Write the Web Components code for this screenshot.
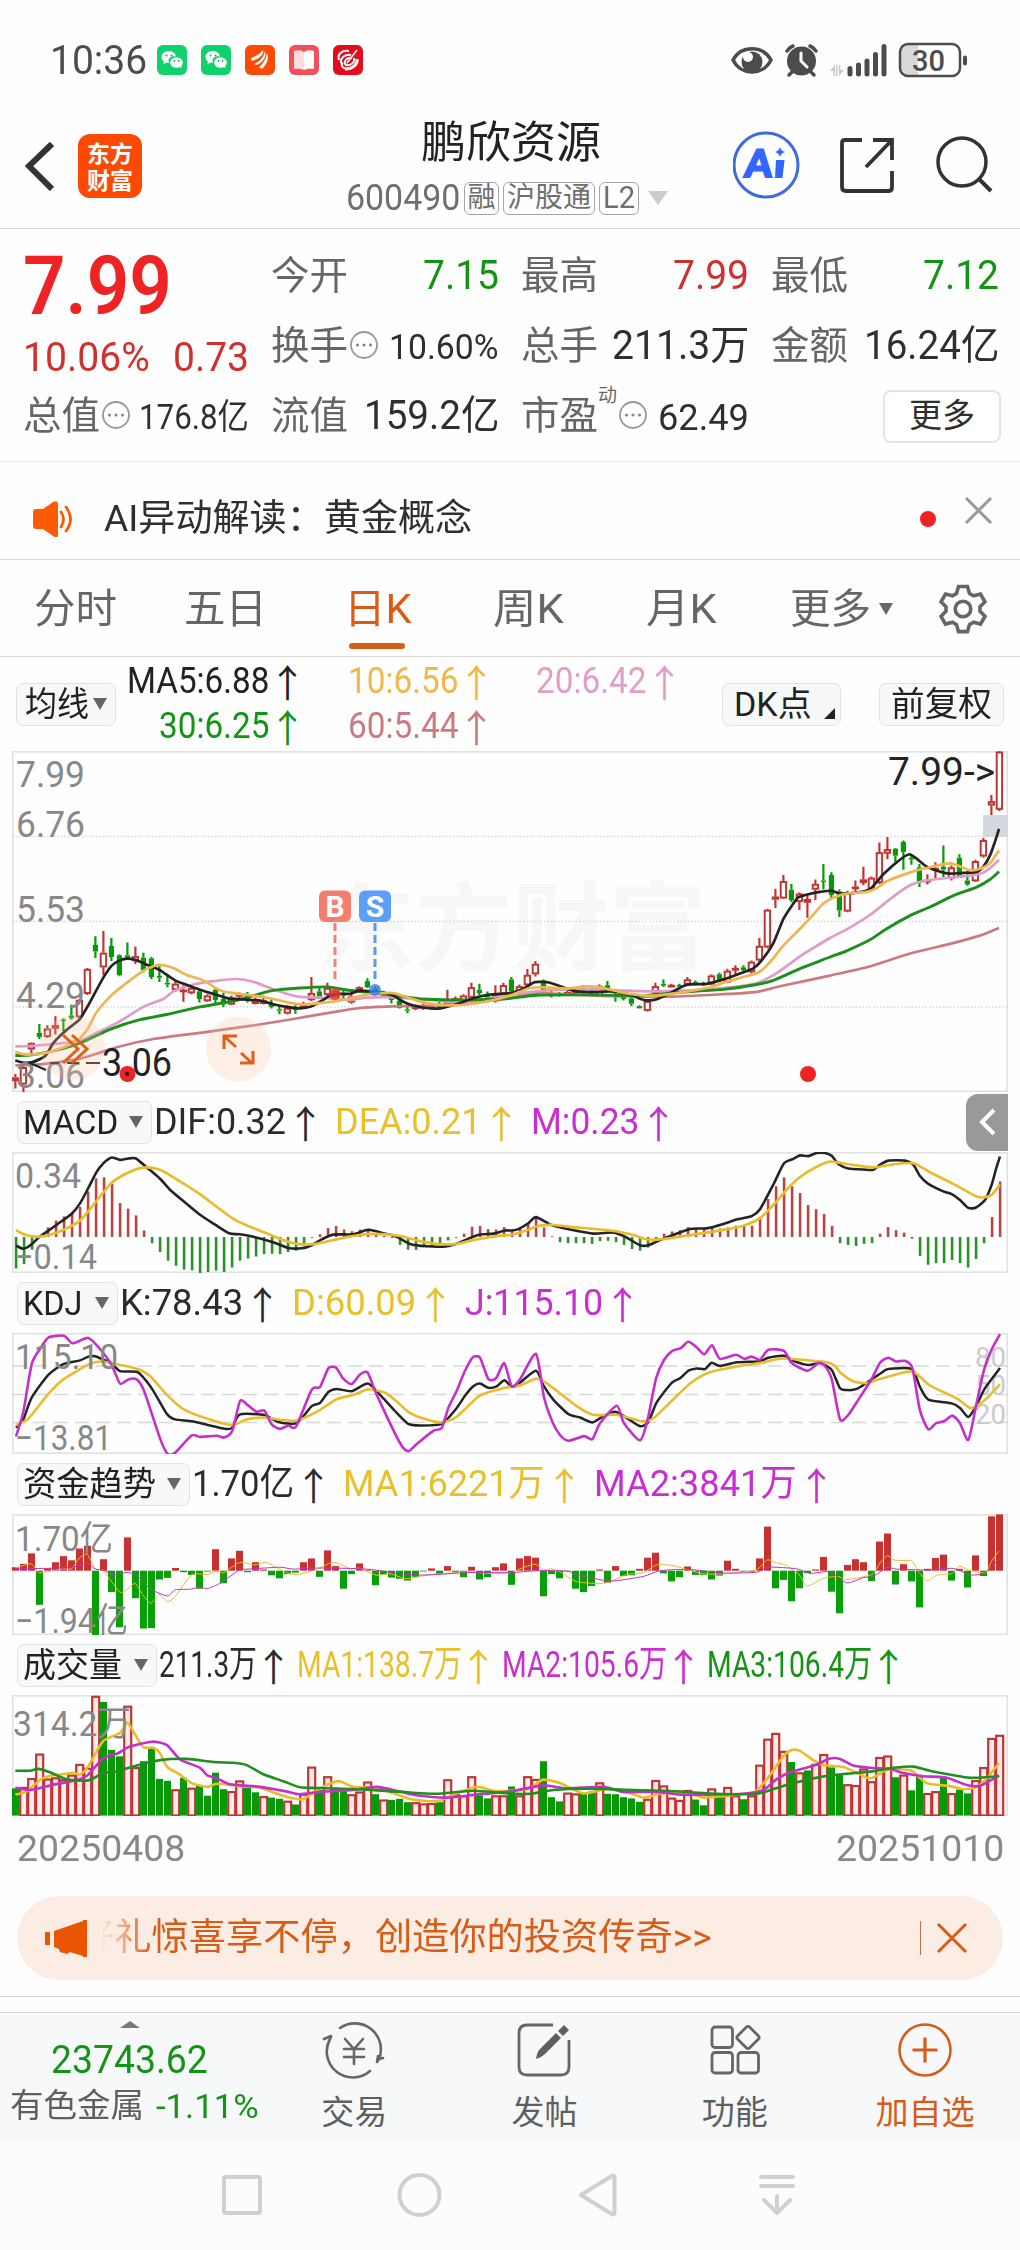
<!DOCTYPE html>
<html lang="zh-CN">
<head>
<meta charset="utf-8">
<title>鹏欣资源 600490</title>
<style>
    body {
        margin: 0;
        width: 1020px;
        height: 2250px;
        overflow: hidden;
        background: #fefefe;
        color: #2b2b2b;
        font-family: Roboto, "Noto Sans CJK SC", sans-serif;
        --up: #d0302e;
        --down: #149414;
        --accent: #d95c16;
        --muted: #666;
        --line: #d9d9d9;
    }
</style>
</head>
<body>
<status-bar></status-bar>
<stock-header></stock-header>
<quote-board></quote-board>
<notice-bar>AI异动解读：黄金概念</notice-bar>
<period-tabs></period-tabs>
<ma-legend></ma-legend>
<chart-panel kind="price"></chart-panel>

<indicator-legend>
    <chip-button w="135" tw="95" arrow>MACD</chip-button>
    <trend-value w="132">DIF:0.32</trend-value>
    <trend-value w="147" style="color:#e9c02c">DEA:0.21</trend-value>
    <trend-value w="108" style="color:#c92fd0">M:0.23</trend-value>
    <side-toggle slot="end"></side-toggle>
</indicator-legend>
<chart-panel kind="macd"></chart-panel>

<indicator-legend>
    <chip-button w="101" tw="59" arrow>KDJ</chip-button>
    <trend-value w="123">K:78.43</trend-value>
    <trend-value w="124" style="color:#e9c02c">D:60.09</trend-value>
    <trend-value w="138" style="color:#c92fd0">J:115.10</trend-value>
</indicator-legend>
<chart-panel kind="kdj"></chart-panel>

<indicator-legend>
    <chip-button w="173" tw="133" arrow>资金趋势</chip-button>
    <trend-value w="102">1.70亿</trend-value>
    <trend-value w="202" style="color:#e9c02c">MA1:6221万</trend-value>
    <trend-value w="203" style="color:#c92fd0">MA2:3841万</trend-value>
</indicator-legend>
<chart-panel kind="fund"></chart-panel>

<indicator-legend style="--item-gap:6px; --arrow-gap:-1px">
    <chip-button w="140" tw="99" arrow>成交量</chip-button>
    <trend-value w="98">211.3万</trend-value>
    <trend-value w="165" style="color:#e9c02c">MA1:138.7万</trend-value>
    <trend-value w="165" style="color:#c92fd0">MA2:105.6万</trend-value>
    <trend-value w="165" style="color:#149414">MA3:106.4万</trend-value>
</indicator-legend>
<chart-panel kind="volume"></chart-panel>

<date-range></date-range>
<promo-banner>好礼惊喜享不停，创造你的投资传奇&gt;&gt;</promo-banner>
<bottom-bar></bottom-bar>
<nav-bar></nav-bar>

<script>
function define(name, html, setup) {
    const template = document.createElement("template");
    template.innerHTML = html;
    customElements.define(name, class extends HTMLElement {
        connectedCallback() {
            if (this.shadowRoot) return;
            this.attachShadow({ mode: "open" }).append(template.content.cloneNode(true));
            if (setup) setup(this, this.shadowRoot);
        }
    });
}

// text squeezed or stretched to the width given by w
define("fit-text", `
    <style>
        :host { display: inline-block; white-space: nowrap; flex: none; }
        span { display: inline-block; transform-origin: 0 50%; }
    </style>
    <span><slot></slot></span>`, (host, root) => {
    const w = Number(host.getAttribute("w"));
    if (!w) return;
    const span = root.querySelector("span");
    const natural = span.offsetWidth;
    host.style.width = w + "px";
    span.style.transform = `scaleX(${w / natural})`;
});

define("chip-button", `
    <style>
        :host {
            display: flex;
            align-items: center;
            flex: none;
            box-sizing: border-box;
            height: 43px;
            padding: 0 0 0 5px;
            border: 1.5px solid #dfe2e6;
            border-radius: 7px;
            background: #f7f8fa;
            color: #222;
            font-size: 34px;
            line-height: 40px;
        }
        :host([center]) { justify-content: center; padding: 0; }
        i {
            display: none;
            margin-left: auto;
            margin-right: 8px;
            border: 7px solid transparent;
            border-top: 12px solid #666;
            border-bottom: 0;
        }
        :host([arrow]) i { display: block; }
    </style>
    <fit-text><slot></slot></fit-text><slot name="mark"></slot><i></i>`, (host, root) => {
    host.style.width = host.getAttribute("w") + "px";
    const text = root.querySelector("fit-text");
    const natural = text.offsetWidth;
    const tw = Number(host.getAttribute("tw"));
    text.style.width = tw + "px";
    text.shadowRoot.querySelector("span").style.transform = `scaleX(${tw / natural})`;
});

define("trend-value", `
    <style>
        :host { display: flex; align-items: center; flex: none; font-size: var(--value-size, 37px); line-height: 44px; }
        b { display: flex; justify-content: center; width: 35px; margin-left: var(--arrow-gap, 2px); font: 400 38px/44px "Noto Sans CJK SC", sans-serif; }
    </style>
    <fit-text><slot></slot></fit-text><b>↑</b>`, (host, root) => {
    const text = root.querySelector("fit-text");
    const w = Number(host.getAttribute("w"));
    const natural = text.offsetWidth;
    text.style.width = w + "px";
    text.shadowRoot.querySelector("span").style.transform = `scaleX(${w / natural})`;
});

define("status-bar", `
    <style>
        :host { display: flex; align-items: center; box-sizing: border-box; height: 120px; padding: 0 53px 0 50px; color: #4c4c4c; }
        .time { font-size: 41px; line-height: 46px; width: 107px; }
        .apps { display: flex; gap: 14px; flex: 1; }
        svg { display: block; flex: none; }
    </style>
    <div class="time"><fit-text w="97">10:36</fit-text></div>
    <div class="apps">
        <svg width="30" height="30" viewBox="0 0 30 30"><rect width="30" height="30" rx="6" fill="#0fd26c"/><path fill="#fff" d="M12 6c-4.500 0-7.500 2.800-7.500 6 0 1.900 1 3.500 2.500 4.500l-.7 2.800 2.900-1.700 2.800.4C10 13 14.500 10.500 18.900 11.500 18.500 8.300 15.500 6 12 6z"/><ellipse cx="19.500" cy="17.500" rx="6.300" ry="5.200" fill="#fff"/><path fill="#fff" d="M21 21l3.500 2.200-.5-3.500z"/><g fill="#0fb35c"><circle cx="9.500" cy="10.500" r="1"/><circle cx="14.500" cy="10.500" r="1"/><circle cx="17.500" cy="16" r=".9"/><circle cx="21.500" cy="16" r=".9"/></g></svg>
        <svg width="30" height="30" viewBox="0 0 30 30"><rect width="30" height="30" rx="6" fill="#0fd26c"/><path fill="#fff" d="M12 6c-4.500 0-7.500 2.800-7.500 6 0 1.900 1 3.500 2.500 4.500l-.7 2.800 2.900-1.700 2.800.4C10 13 14.500 10.500 18.900 11.500 18.500 8.300 15.500 6 12 6z"/><ellipse cx="19.500" cy="17.500" rx="6.300" ry="5.200" fill="#fff"/><path fill="#fff" d="M21 21l3.500 2.200-.5-3.500z"/><g fill="#0fb35c"><circle cx="9.500" cy="10.500" r="1"/><circle cx="14.500" cy="10.500" r="1"/><circle cx="17.500" cy="16" r=".9"/><circle cx="21.500" cy="16" r=".9"/></g></svg>
        <svg width="30" height="30" viewBox="0 0 30 30"><rect width="30" height="30" rx="6" fill="#fb4a04"/><g fill="#fff"><path d="M6 13C11 11 15 9 18 5c1.500 5-5 9-11 11z"/><path d="M9 19c5-2 9-6 11-12.500C22 12 17 18 12 20z"/><path d="M14 22c4-3 7-8 8-14 2.500 5-.5 12-5 16z"/></g></svg>
        <svg width="30" height="30" viewBox="0 0 30 30"><rect width="30" height="30" rx="6" fill="#f4505a"/><path fill="#fdd" d="M5 6c4-1 7-1 10 1v18c-3-1.500-6-1.500-10-1z"/><path fill="#fff" d="M15 7c3-2 6-2 10-1v18c-4-.5-7-.5-10 1z"/></svg>
        <svg width="30" height="30" viewBox="0 0 30 30"><rect width="30" height="30" rx="6" fill="#e60a1c"/><g fill="none" stroke="#fff" stroke-width="2"><path d="M16 6C9 5 4 9 6 15"/><path d="M8 18c-1-5 4-9 10-8"/><path stroke-width="3" d="M24 14c1 5-4 10-12 10"/><path d="M14 24c-6-1-6-5-4-6M19 13c-6-1-9 4-6 7 5 1 9-3 8-7"/><path stroke-width="1.500" d="M14 18L24 5"/></g></svg>
    </div>
    <svg width="237" height="36" viewBox="730 41 237 36">
        <path d="M733 59C741 44 763 44 771 59 763 75 741 75 733 59z" fill="none" stroke="#4c4c4c" stroke-width="3.500"/>
        <circle cx="752" cy="61" r="10.500" fill="#4c4c4c"/><circle cx="748" cy="56" r="5" fill="#fefefe"/>
        <circle cx="801.500" cy="60" r="14.500" fill="#4c4c4c"/>
        <path d="M787 50q3-4 6-5M816 50q-3-4-6-5M793 70l-4 4M810 70l4 4" stroke="#4c4c4c" stroke-width="3.500" fill="none" stroke-linecap="round"/>
        <path d="M801 52v8l6 6" stroke="#fefefe" stroke-width="3" fill="none" stroke-linecap="round"/>
        <g fill="#c9c9c9"><path d="M830 70l5-6v11h-1.500v-5zM844 69l-5 6V64h1.500v5z"/><path d="M836 64h1.500v11H836z"/></g>
        <g stroke="#4c4c4c" stroke-width="5" stroke-linecap="round"><path d="M850 67.500V73M858.500 64V73M867 60V73M875.500 53.500V73M884 45.500V73"/></g>
        <path d="M908 43.500h10v31h-10q-7 0-7-7v-17q0-7 7-7z" fill="#d9d9d9"/>
        <rect x="900" y="43" width="60" height="32" rx="8" fill="none" stroke="#4c4c4c" stroke-width="2.500"/>
        <path d="M965 56.500v6" stroke="#4c4c4c" stroke-width="4" stroke-linecap="round"/>
        <text x="912" y="69.500" font-size="30" font-weight="500" fill="#4c4c4c" textLength="33" lengthAdjust="spacingAndGlyphs">30</text>
    </svg>`);

define("stock-header", `
    <style>
        :host { display: grid; grid-template-columns: 142px 1fr 287px; box-sizing: border-box; height: 109px; border-bottom: 1.500px solid var(--line); }
        .left { display: flex; align-items: center; padding: 0 0 17px 25px; gap: 24px; }
        .logo { display: grid; place-content: center; width: 64px; height: 64px; border-radius: 12px; background: #fd4902; color: #fff; font: 700 23px/27px "Noto Sans CJK SC", sans-serif; }
        .mid { display: flex; flex-direction: column; padding-left: 0; }
        .name { margin: -3px 0 0 279px; height: 53px; font-size: 44px; line-height: 53px; color: #222; }
        .code { display: flex; align-items: center; gap: 4px; height: 56px; margin: 0 0 0 204px; font-size: 36px; color: #6f6f6f; }
        .tag { display: grid; place-content: center; box-sizing: border-box; height: 33px; border: 1.500px solid #a5a5a5; border-radius: 6px; font-size: 28px; line-height: 30px; }
        .tri { margin-left: 5px; border: 10.500px solid transparent; border-top: 14px solid #ccc; border-bottom: 0; }
        svg { display: block; }
    </style>
    <div class="left">
        <svg width="29" height="50" viewBox="25 140 29 50"><path d="M52 143L29 165l23 23" fill="none" stroke="#333" stroke-width="6"/></svg>
        <div class="logo"><div>东方</div><div>财富</div></div>
    </div>
    <div class="mid">
        <div class="name"><fit-text w="180">鹏欣资源</fit-text></div>
        <div class="code">
            <fit-text w="114">600490</fit-text>
            <span class="tag" style="width:35px">融</span>
            <span class="tag" style="width:92px"><fit-text w="84">沪股通</fit-text></span>
            <span class="tag" style="width:40px;font-size:31px"><fit-text w="32">L2</fit-text></span>
            <i class="tri"></i>
        </div>
    </div>
    <svg width="287" height="108" viewBox="733 120 287 108">
        <circle cx="766" cy="165" r="32" fill="none" stroke="#4169e1" stroke-width="3"/>
        <text transform="translate(744 177) skewX(-5)" font-family="Lato" font-weight="900" font-size="38" fill="#3366ff" stroke="#3366ff" stroke-width="2" textLength="27" lengthAdjust="spacingAndGlyphs">A</text>
        <path d="M776 160h8.500l-2 18h-7.500zM780 147q1 4 5 5-4 1-5 5-1-4-5-5 4-1 5-5z" fill="#3366ff"/>
        <path d="M862 140h-17q-3 0-3 3v44q0 4 4 4h43q3 0 3-4v-16M873 140h19v20M892 140l-26 27" fill="none" stroke="#333" stroke-width="3.800"/>
        <circle cx="962" cy="162" r="24" fill="none" stroke="#333" stroke-width="3.500"/><path d="M979 179l12 12" stroke="#333" stroke-width="4"/>
    </svg>`);

const info = `<svg width="28" height="28" viewBox="0 0 28 28"><circle cx="14" cy="14" r="13" fill="none" stroke="#999" stroke-width="1.800"/><g fill="#888"><circle cx="7.500" cy="14" r="1.600"/><circle cx="14" cy="14" r="1.600"/><circle cx="20.500" cy="14" r="1.600"/></g></svg>`;

define("quote-board", `
    <style>
        :host { display: grid; grid-template-columns: 226px 228px 228px 228px; column-gap: 22px; box-sizing: border-box; height: 233px; padding: 12px 0 0 23px; border-bottom: 1.500px solid #ececec; font-size: 40px; color: #2f2f2f; }
        .col { display: grid; grid-template-rows: 70px 70px 70px; }
        .cell { display: flex; align-items: center; box-sizing: border-box; line-height: 46px; }
        .label { color: #666; font-size: 39px; }
        .cell > :last-child { margin-left: auto; }
        .cell > svg { margin: 0 0 3px 2px; flex: none; }
        .red { color: var(--up); }
        .green { color: var(--down); }
        .small { font-size: 35px; padding-top: 3px; }
        .price { color: #ee2424; font-weight: 600; font-size: 81px; line-height: 60px; padding-top: 22px; height: 70px; }
        .price > :last-child { margin-left: 0; }
        .change { padding-top: 24px; }
        sup { font-size: 19px; line-height: 20px; align-self: flex-start; margin-top: 5px; color: #666; }
        button { width: 118px; height: 53px; padding: 0; margin-right: -2px; border: 2px solid #e4e4e4; border-radius: 8px; background: #fff; font: 33px/46px Roboto, "Noto Sans CJK SC", sans-serif; color: #2f2f2f; }
    </style>
    <div class="col">
        <div class="cell price"><fit-text w="149">7.99</fit-text></div>
        <div class="cell red change"><fit-text w="127">10.06%</fit-text><fit-text w="76">0.73</fit-text></div>
        <div class="cell"><fit-text class="label" w="77">总值</fit-text>${info}<fit-text class="small" w="110">176.8亿</fit-text></div>
    </div>
    <div class="col">
        <div class="cell"><fit-text class="label" w="77">今开</fit-text><fit-text class="green" w="76">7.15</fit-text></div>
        <div class="cell"><fit-text class="label" w="77">换手</fit-text>${info}<fit-text class="small" w="110">10.60%</fit-text></div>
        <div class="cell"><fit-text class="label" w="77">流值</fit-text><fit-text w="135">159.2亿</fit-text></div>
    </div>
    <div class="col">
        <div class="cell"><fit-text class="label" w="77">最高</fit-text><fit-text class="red" w="76">7.99</fit-text></div>
        <div class="cell"><fit-text class="label" w="77">总手</fit-text><fit-text w="137">211.3万</fit-text></div>
        <div class="cell"><fit-text class="label" w="77">市盈</fit-text><sup>动</sup>${info}<fit-text class="small" w="91" style="font-size:37px">62.49</fit-text></div>
    </div>
    <div class="col">
        <div class="cell"><fit-text class="label" w="77">最低</fit-text><fit-text class="green" w="76">7.12</fit-text></div>
        <div class="cell"><fit-text class="label" w="77">金额</fit-text><fit-text w="135">16.24亿</fit-text></div>
        <div class="cell"><button>更多</button></div>
    </div>`);

define("notice-bar", `
    <style>
        :host { display: flex; align-items: center; box-sizing: border-box; height: 98px; padding: 17px 27px 0 32px; border-bottom: 1.500px solid var(--line); font-size: 37px; line-height: 44px; color: #2f2f2f; }
        fit-text { margin: 0 auto 0 30px; }
        i { width: 16px; height: 16px; margin-right: 28px; border-radius: 50%; background: #ee2424; }
        .close { margin-bottom: 18px; }
    </style>
    <svg width="42" height="36" viewBox="31 500 42 36"><path fill="#fd5a05" d="M35 508h7l10-7q5-2 5 2v31q0 4-5 1l-10-7h-7q-3 0-3-3v-14q0-3 3-3z"/><path d="M60 511q5 7 0 15M65 506q9 12 0 24" fill="none" stroke="#fd5a05" stroke-width="2.800" stroke-linecap="round"/></svg>
    <fit-text w="368"><slot></slot></fit-text>
    <i></i>
    <svg class="close" width="29" height="29" viewBox="0 0 29 29"><path d="M2 2l25 25M27 2L2 27" stroke="#999" stroke-width="3"/></svg>`);

define("period-tabs", `
    <style>
        :host { display: grid; grid-template-columns: 150px 160px 149px 153px 144px 147px 1fr; box-sizing: border-box; height: 97px; padding-left: 34px; border-bottom: 1.500px solid var(--line); font-size: 41px; line-height: 50px; color: var(--muted); }
        div { display: flex; align-items: center; padding-top: 1px; }
        .on { position: relative; color: var(--accent); }
        .on::after { content: ""; position: absolute; left: 5px; bottom: 7px; width: 56px; height: 6px; border-radius: 3px; background: var(--accent); }
        i { margin-left: 8px; border: 7px solid transparent; border-top: 12px solid #666; border-bottom: 0; }
    </style>
    <div><fit-text w="83">分时</fit-text></div>
    <div><fit-text w="83">五日</fit-text></div>
    <div class="on"><fit-text w="68">日K</fit-text></div>
    <div><fit-text w="71">周K</fit-text></div>
    <div><fit-text w="71">月K</fit-text></div>
    <div><fit-text w="81">更多</fit-text><i></i></div>
    <div><svg width="48" height="50" viewBox="-24 -25 48 50" style="margin-left:2px"><g fill="none" stroke="#666" stroke-width="3.600"><circle r="7.800"/><path d="M-4.500-22.500h9l2 7 4 2.300 7-1.800 4.500 7.800-5 5v4.500l5 5-4.500 7.800-7-1.800-4 2.300-2 7h-9l-2-7-4-2.300-7 1.800-4.500-7.800 5-5v-4.500l-5-5 4.500-7.800 7 1.800 4-2.300z"/></g></svg></div>`);

define("ma-legend", `
    <style>
        :host { display: flex; align-items: center; box-sizing: border-box; height: 94px; padding: 0 16px; --value-size: 36px; --arrow-gap: 1px; }
        .values { display: grid; grid-template-columns: 189px 189px 188px; grid-auto-rows: 45px; justify-items: end; flex: none; margin-bottom: 1px; margin-right: 40px; }
        trend-value { height: 45px; }
        .corner { margin-left: auto; margin: 19px 5px 0 auto; border-left: 11px solid transparent; border-bottom: 11px solid #222; }
    </style>
    <chip-button w="100" tw="64" arrow style="padding-left:8px">均线</chip-button>
    <div class="values">
        <trend-value w="142" style="color:#222">MA5:6.88</trend-value>
        <trend-value w="110" style="color:#efb84a">10:6.56</trend-value>
        <trend-value w="110" style="color:#e09fca">20:6.42</trend-value>
        <trend-value w="110" style="color:#149414">30:6.25</trend-value>
        <trend-value w="110" style="color:#cb7a80">60:5.44</trend-value>
    </div>
    <chip-button w="119" tw="78" style="padding-left:11px">DK点<i class="corner" slot="mark"></i></chip-button>
    <chip-button w="125" tw="101" center style="margin-left:auto">前复权</chip-button>`);

define("indicator-legend", `
    <style>
        :host { display: flex; align-items: center; gap: var(--item-gap, 12px); box-sizing: border-box; height: 60px; padding: 0 12px 0 17px; }
        ::slotted(chip-button) { margin-right: calc(2px - var(--item-gap, 12px)); }
        slot[name=end] { display: block; margin-left: auto; }
    </style>
    <slot></slot><slot name="end"></slot>`);

define("side-toggle", `
    <style>
        :host { display: grid; place-content: center; width: 42px; height: 57px; border-radius: 12px 0 0 12px; background: #999; }
        svg { display: block; }
    </style>
    <svg width="18" height="28" viewBox="0 0 18 28"><path d="M16 2L4 14l12 12" fill="none" stroke="#fff" stroke-width="4"/></svg>`);

define("date-range", `
    <style>
        :host { display: flex; justify-content: space-between; height: 80px; padding: 10px 16px 0 17px; font-size: 37px; line-height: 46px; color: #888; box-sizing: border-box; }
    </style>
    <fit-text w="168">20250408</fit-text><fit-text w="168">20251010</fit-text>`);

define("promo-banner", `
    <style>
        :host { display: block; box-sizing: border-box; height: 101px; border-bottom: 1.500px solid #d6d6da; }
        .pill { display: flex; align-items: center; width: 986px; height: 84px; margin: 0 17px; border-radius: 42px; background: #fcede4; color: var(--accent); font-size: 37px; line-height: 46px; box-sizing: border-box; padding: 0 35px 0 27px; }
        .text { flex: 1; margin-left: 13px; overflow: hidden; mask-image: linear-gradient(90deg, transparent, #000 50px); -webkit-mask-image: linear-gradient(90deg, transparent, #000 50px); }
        .text fit-text { margin-left: -24px; }
        i { width: 1.500px; height: 34px; margin-right: 15px; background: #c9713f; }
    </style>
    <div class="pill">
        <svg width="44" height="40" viewBox="44 1917 44 40"><path fill="#ea5504" d="M45 1931h5v13h-5zM54 1930l29-10v-1h4v37h-4v-1l-13-4-3 2-7-2-1-3-5-2z"/></svg>
        <div class="text"><fit-text w="635"><slot></slot></fit-text></div>
        <i></i>
        <svg width="32" height="32" viewBox="0 0 32 32"><path d="M2 2l28 28M30 2L2 30" stroke="#d95c16" stroke-width="3"/></svg>
    </div>`);

define("bottom-bar", `
    <style>
        :host { display: grid; grid-template-columns: 259px repeat(4, 190.250px); box-sizing: border-box; height: 128px; margin-top: 15px; border-top: 1.500px solid #d3d5da; background: #f7f8fa; color: #5f5f5f; font-size: 33px; }
        .index { display: flex; flex-direction: column; align-items: center; padding-top: 8px; }
        .tri { border: 10px solid transparent; border-bottom: 7px solid #77797d; border-top: 0; }
        .big { color: var(--down); font-size: 39px; line-height: 46px; margin-top: 9px; }
        .row { display: flex; align-self: stretch; gap: 12px; padding: 1px 0 0 10px; line-height: 44px; }
        .item { display: flex; flex-direction: column; align-items: center; padding-top: 7px; line-height: 46px; gap: 10px; }
        .on { color: var(--accent); }
        svg { display: block; }
    </style>
    <div class="index">
        <i class="tri"></i>
        <fit-text class="big" w="157">23743.62</fit-text>
        <div class="row"><fit-text w="134">有色金属</fit-text><fit-text w="103" style="color:var(--down);font-size:34px">-1.11%</fit-text></div>
    </div>
    <div class="item"><svg width="64" height="60" viewBox="-32 -30 64 60"><g fill="none" stroke="#666" stroke-width="2.600" stroke-linecap="round"><path d="M-14-22A26 26 0 0 1 25 9l-2 3M25 9l4-1M23 12l1-6M16 21A26 26 0 0 1-24-11l1-2M-23-14l-7 3"/><path d="M-9-11l9 10 9-10M0-1v15M-10-1h20M-10 7h20"/></g></svg><fit-text>交易</fit-text></div>
    <div class="item"><svg width="64" height="60" viewBox="-32 -30 64 60"><path d="M9-25h-26q-8 0-8 8v34q0 8 8 8h34q8 0 8-8v-27" fill="none" stroke="#666" stroke-width="2.800"/><path fill="#5f5f5f" d="M-8 9q1-7 4-10l16-16 5 5L1 4q-3 3-9 5zM14-19l6-6 5 5-6 6z"/></svg><fit-text>发帖</fit-text></div>
    <div class="item"><svg width="64" height="60" viewBox="-32 -30 64 60"><g fill="none" stroke="#666" stroke-width="2.800"><rect x="-23" y="-23" width="20.500" height="20.500" rx="3"/><rect x="-23" y="2.500" width="20.500" height="20.500" rx="3"/><rect x="3" y="2.500" width="20.500" height="20.500" rx="3"/><rect x="4.500" y="-21" width="17" height="17" rx="2.500" transform="rotate(45 13 -12.500)"/></g></svg><fit-text>功能</fit-text></div>
    <div class="item on"><svg width="64" height="60" viewBox="-32 -30 64 60"><g fill="none" stroke="#d95c16" stroke-width="2.600"><circle r="25.500"/><path stroke-width="3.200" d="M-12.500 0h25M0-12.500v25"/></g></svg><fit-text>加自选</fit-text></div>`);

define("nav-bar", `
    <style>
        :host { display: flex; align-items: center; height: 110px; padding-left: 220px; gap: 133px; background: #fcfcfc; }
        svg { display: block; overflow: visible; }
        g { fill: none; stroke: #d0d0d0; stroke-width: 4; stroke-linecap: round; stroke-linejoin: round; }
    </style>
    <svg width="44" height="44"><g><rect x="4" y="4" width="36" height="36" rx="1.500"/></g></svg>
    <svg width="44" height="44"><g><circle cx="22.500" cy="22" r="20"/></g></svg>
    <svg width="44" height="44"><g><path d="M7 22L38.500 2.500q2 0 2 2v35q0 2-2 2z"/></g></svg>
    <svg width="44" height="44" style="margin-left:3px"><g><path d="M7 4h32M7 13h32M23 23v16M10 27l13 13 13-13"/></g></svg>`);

/* ---- charts ---- */

const WIDTH = 996, HALF = 1530;

// every candle: high, body top, body bottom, low; a leading "g" marks a falling day
const CANDLES = `970,980,990,1012 945,950,1000,1022 878,880,898,910 g825,850,862,868 828,838,862,865 802,828,838,855 g808,812,816,845 g768,800,808,812
752,755,805,808 662,665,737,740 g570,595,614,633 555,618,660,682 g575,598,630,642 g622,625,683,686 g588,625,632,638 600,628,642,650
g618,632,668,675 g630,634,688,694 g655,685,690,703 g680,705,710,718 700,708,726,730 712,725,728,760 715,720,735,738 g722,730,752,762
738,742,758,760 g720,725,755,765 g735,752,768,775 742,748,768,770 733,738,745,752 g732,738,755,762 748,754,766,768 742,756,766,768
g752,765,775,780 g770,782,786,796 770,778,794,797 g770,778,784,795 760,766,775,778 688,735,755,758 g715,730,745,750 705,720,740,745
722,728,748,755 g728,734,742,750 730,745,762,766 715,718,728,732 g692,700,718,720 g715,722,730,735 g728,734,742,748 g738,744,755,765
g750,757,778,780 g775,782,786,793 768,772,781,784 765,770,780,784 766,770,780,783 g760,768,778,783 725,752,768,772 745,750,762,766
738,742,758,760 705,718,748,753 g708,725,735,742 g730,738,748,755 712,738,758,762 705,712,738,742 g688,695,730,735 710,715,740,742
665,682,712,716 642,650,680,687 g695,698,730,735 g728,735,740,748 g732,738,742,745 728,732,740,742 722,726,736,740 g712,722,732,736
g720,725,733,738 710,714,742,745 g700,712,720,724 g730,738,745,760 g738,744,752,756 g746,750,766,772 g770,773,779,780 752,758,786,788
705,715,735,738 g695,708,713,717 708,711,716,718 g708,711,716,720 688,695,710,713 g698,703,709,712 g702,706,712,714 680,684,710,712
g676,680,698,702 664,670,704,706 654,662,668,680 g654,660,668,672 640,644,674,678 575,598,640,648 490,493,602,605 432,455,463,488
392,410,460,462 g418,435,465,470 442,446,470,494 450,462,472,516 405,418,434,465 g360,408,412,434 g384,392,450,460 g434,440,495,514
438,442,498,500 408,426,432,440 368,405,415,422 396,400,432,435 298,326,415,418 282,317,330,346 g314,316,336,355 g292,296,325,377
g335,342,347,362 g360,370,415,427 390,406,412,420 355,372,378,402 g306,368,376,398 364,370,402,408 g332,342,396,400 g380,408,420,423
348,352,410,412 285,291,338,342 160,178,190,218 32,34,202,206`;

const MACD = [1535,1522,1480,1445,1415,1395,1383,1375,1355,1310,1272,1269,1288,1344,1360,1380,1424,1461,1487,1512,1527,1538,1540,1548,1545,1541,1545,1532,1512,1506,1500,1493,
    1492,1493,1487,1483,1468,1445,1435,1417,1411,1421,1426,1421,1419,1432,1440,1446,1466,1480,1481,1472,1470,1466,1453,1443,1433,1413,1411,1420,1421,1414,1426,1420,
    1403,1385,1415,1441,1458,1461,1461,1461,1463,1455,1454,1458,1466,1478,1483,1474,1452,1433,1427,1423,1414,1418,1417,1415,1418,1415,1410,1411,1410,1385,1332,1295,
    1269,1295,1315,1350,1362,1376,1411,1461,1466,1469,1463,1461,1433,1414,1423,1430,1448,1498,1524,1519,1519,1510,1519,1532,1507,1461,1385,1281];

const FUND = [776,767,740,874,779,763,747,758,727,720,953,755,841,933,698,857,936,935,808,804,778,789,796,832,787,729,818,753,733,789,763,782,
    797,805,794,790,763,753,801,732,773,832,794,766,783,823,795,803,806,811,801,787,779,794,773,788,802,775,808,802,776,766,822,753,
    747,751,852,794,805,786,832,841,825,782,817,773,799,797,780,751,738,792,813,802,774,796,796,808,798,759,780,788,788,753,670,831,
    809,865,831,791,782,749,840,896,770,755,763,812,709,688,821,768,813,881,780,752,743,811,780,829,745,799,643,638];

const VOLUME = `g1354 1350 1327 1263 1328 1325 1330 1318 1290 1300 1112 g1128 g1253 g1270 1138 1298 g1283 g1249 g1329 g1334 1356 g1326 1352 g1347 g1373 g1313 g1356 1361 1333 g1352 g1364 1374
g1378 g1381 1386 g1396 1368 1297 g1358 1322 g1352 g1353 1369 1362 1336 g1369 1383 g1384 g1381 g1390 1390 1393 1392 g1390 1330 1369 1372 1322 g1372 g1380 1372 1372 g1349 1372
1322 1329 g1283 g1377 g1388 1365 1367 g1368 g1362 1338 g1368 g1369 g1377 g1380 g1389 1381 1332 1346 1378 1384 1358 g1383 g1398 1354 g1374 1350 1372 g1382 1372 1292 1224 1209
1256 g1285 1312 g1307 1290 1264 g1299 g1318 1343 1345 1302 1335 1272 1268 g1325 1318 g1359 g1322 1366 1361 g1326 1366 g1357 g1367 1332 1298 1222 1214`;

const RED = "#bd3835", GREEN = "#079a07", GOLD = "#e9bc2c", PURPLE = "#c530cb", BLACK = "#242424";

class Plot {
    constructor(height, top, bottom) {
        this.height = height;
        this.top = top;
        this.scale = height / (bottom - top);
        this.out = [];
    }
    x(i) { return 3.4 + i * 8; }
    y(v) { return +((v - this.top) * this.scale).toFixed(1); }
    add(s) { this.out.push(s); }
    rect(x, y, w, h, fill, extra = "") {
        this.add(`<rect x="${x}" y="${y}" width="${w}" height="${Math.max(h, .8)}" fill="${fill}" ${extra}/>`);
    }
    // two flat x,y lists, the first and the second half of the time span
    line(color, width, a, b) {
        const pts = [];
        [a, b].forEach((list, half) => {
            for (let k = 0; k < list.length; k += 2)
                pts.push([(list[k] + half * HALF) / 3 - 12, this.y(list[k + 1])]);
        });
        let d = `M${pts[0][0].toFixed(1)} ${pts[0][1]}`;
        for (let k = 1; k < pts.length; k++) {
            const p0 = pts[k - 2] || pts[k - 1], p1 = pts[k - 1], p2 = pts[k], p3 = pts[k + 1] || p2;
            const t = .11;
            d += `C${[p1[0] + (p2[0] - p0[0]) * t, p1[1] + (p2[1] - p0[1]) * t, p2[0] - (p3[0] - p1[0]) * t, p2[1] - (p3[1] - p1[1]) * t, p2[0], p2[1]].map(n => n.toFixed(1)).join(" ")}`;
        }
        this.add(`<path d="${d}" fill="none" stroke="${color}" stroke-width="${width}" stroke-linejoin="round"/>`);
    }
    text(s, x, y, w, size = 35, color = "#888", extra = "") {
        this.add(`<text x="${x}" y="${y}" font-size="${size}" fill="${color}" textLength="${w}" lengthAdjust="spacingAndGlyphs" ${extra}>${s}</text>`);
    }
    grid(ys, dash, color) {
        ys.forEach(y => this.add(`<path d="M0 ${y}H${WIDTH}" stroke="${color}" stroke-width="1.500" stroke-dasharray="${dash}"/>`));
    }
}

const charts = {
    price() {
        const p = new Plot(341, 32, 1022);
        p.text("东方财富", 305, 212, 390, 97, "#f7f7f7", `font-weight="700"`);
        p.grid([85.500, 170.500, 256], "1.500 2", "#d8d8d8");
        p.rect(971, 64, 25, 22, "#d4d8df");
        CANDLES.split(/\s+/).forEach((item, i) => {
            const down = item[0] === "g";
            const [h, t, b, l] = item.replace("g", "").split(",").map(v => p.y(Number(v)));
            const x = p.x(i), color = down ? GREEN : RED;
            p.add(`<path d="M${x} ${h}V${t}M${x} ${b}V${l}" stroke="${color}" stroke-width="2.200"/>`);
            if (down) p.rect(x - 2.600, t, 5.200, b - t, color);
            else p.rect(x - 2.700, t + .8, 5.400, b - t - 1.600, "#fff", `stroke="${color}" stroke-width="2"`);
        });
        p.line("#cb7a80", 2.700, [46,945,120,942,240,925,350,892,460,868,600,850,750,830,880,810,1000,790,1080,778,1160,774,1300,771,1420,762],
            [0,750,80,735,250,742,480,745,640,738,740,731,810,715,960,684,1070,660,1200,620,1320,592,1410,568,1467,546]);
        p.line("#e09cc8", 2.700, [46,890,110,887,190,880,240,873,290,850,350,822,430,775,490,752,520,730,580,710,640,700,710,694,760,702,810,720,860,737,900,746,960,748,1050,755,1100,748,1180,747,1250,752,1320,757,1400,760],
            [0,740,100,728,250,724,350,728,420,730,540,727,640,720,740,706,800,677,870,628,960,575,1010,550,1080,508,1140,462,1200,422,1250,408,1320,400,1380,394,1420,385,1445,368,1467,348]);
        p.line("#1c8f1c", 2.900, [46,916,90,915,150,905,240,880,330,840,420,812,500,797,600,775,700,758,750,745,820,727,900,720,980,717,1040,726,1110,733,1200,744,1270,752,1350,755,1430,754],
            [0,750,80,741,250,740,400,742,500,733,640,724,740,710,790,698,870,664,960,630,1010,612,1080,580,1130,548,1200,510,1260,485,1330,452,1400,427,1440,405,1467,382]);
        p.line(BLACK, 2.700, [46,930,70,937,94,936,118,928,138,915,160,880,190,850,215,830,240,810,265,770,290,725,310,690,335,655,355,642,380,635,405,638,430,648,455,658,480,668,505,685,530,700,555,709,600,725,650,740,690,751,740,754,780,757,820,767,860,775,900,779,935,773,965,757,985,745,1010,737,1050,737,1080,728,1125,732,1150,733,1180,742,1210,760,1240,771,1280,778,1320,779,1370,767,1420,750,1470,739],
            [0,735,40,722,75,703,120,705,170,722,200,730,250,732,300,730,340,735,370,742,390,751,410,756,440,753,480,735,530,711,590,708,640,695,690,678,730,663,755,640,790,590,820,520,850,475,865,457,900,447,930,441,965,438,990,446,1040,443,1080,433,1120,390,1160,355,1200,332,1250,368,1290,382,1320,388,1360,386,1400,383,1420,368,1440,335,1455,295,1467,258]);
        p.line("#efb650", 2.700, [46,905,70,912,94,913,140,908,190,892,235,870,262,840,290,790,330,745,380,705,430,670,460,657,480,653,520,662,560,682,610,698,660,727,700,735,760,742,820,752,870,763,910,768,960,764,1010,758,1060,748,1110,738,1180,735,1220,747,1280,764,1330,770,1400,768,1470,757],
            [0,742,60,720,110,718,170,722,220,716,270,718,330,732,390,741,430,743,500,735,600,718,640,705,700,688,745,675,780,645,820,597,870,548,910,507,940,475,970,458,1010,446,1070,441,1100,430,1130,410,1190,388,1240,374,1320,358,1380,378,1410,374,1440,358,1467,320]);
        [["7.99", 35.500], ["6.76", 86], ["5.53", 170.500], ["4.29", 256.500], ["3.06", 337]].forEach(([s, y]) => p.text(s, 4, y, 69, 36));
        p.text("7.99-&gt;", 876, 34, 107, 38, BLACK);

        // low price mark
        p.add(`<path d="M34 305L18 312l16 7M38 312h9M55 312h12M74 312h14" fill="none" stroke="${BLACK}" stroke-width="2.200"/>`);
        p.add(`<circle cx="115.500" cy="323" r="8" fill="#ee2424"/><circle cx="796" cy="323" r="8" fill="#ee2424"/>`);
        p.text("3.06", 90, 325, 70, 38, BLACK);
        // trade marks
        p.add(`<path d="M323 172v56" stroke="#ea8579" stroke-width="3" stroke-dasharray="8 4"/><path d="M363 172v56" stroke="#5b9ae8" stroke-width="3" stroke-dasharray="8 4"/>
            <circle cx="323" cy="243" r="6" fill="#e63a30" opacity=".75"/><circle cx="363" cy="239" r="6" fill="#2f80ec" opacity=".8"/>
            <rect x="307" y="139.500" width="32" height="31.500" rx="6" fill="#f57d6d"/><rect x="347" y="139.500" width="32" height="31.500" rx="6" fill="#5d9ff8"/>
            <text x="323" y="165.500" font-size="30" font-weight="700" fill="#fff" text-anchor="middle">B</text><text x="363" y="165.500" font-size="30" font-weight="700" fill="#fff" text-anchor="middle">S</text>`);
        // round buttons
        p.add(`<circle cx="60.500" cy="297" r="32.500" fill="#fbbf9e" opacity=".25"/><circle cx="226.500" cy="298" r="32.500" fill="#fbbf9e" opacity=".25"/>
            <g fill="none" stroke="#df5f17" stroke-width="3"><path d="M51 284l15 14-15 14M60 284l15 14-15 14"/>
            <path d="M225 285h-13v13M213 286l11 10M241 300v12h-13M229 302l11 10"/></g>`);
        return p;
    },
    macd() {
        const p = new Plot(121, 1195, 1548), zero = p.y(1443);
        MACD.forEach((v, i) => {
            const y = p.y(v);
            p.rect(p.x(i) - .6, Math.min(y, zero), 2.600, Math.abs(y - zero), y < zero ? "#b84541" : "#2b922b");
        });
        p.line(BLACK, 2.600, [48,1468,70,1477,94,1465,118,1443,166,1410,215,1375,240,1345,265,1300,290,1253,310,1228,335,1211,360,1218,385,1214,408,1214,440,1240,480,1273,510,1305,550,1338,600,1378,650,1410,690,1433,720,1435,780,1447,830,1462,865,1475,905,1476,935,1467,965,1450,1000,1436,1060,1435,1105,1422,1150,1432,1190,1442,1230,1463,1280,1470,1330,1471,1365,1464,1400,1450,1440,1436,1480,1433,1515,1424],
            [5,1424,25,1420,55,1403,78,1385,125,1408,180,1421,250,1433,310,1430,345,1442,390,1467,415,1467,450,1452,540,1420,590,1418,640,1405,680,1392,725,1382,750,1362,790,1290,822,1228,850,1215,870,1205,895,1207,920,1198,945,1198,965,1206,985,1230,1015,1243,1060,1246,1090,1247,1110,1232,1135,1220,1185,1220,1210,1232,1230,1265,1255,1288,1300,1310,1325,1318,1350,1335,1375,1358,1398,1357,1425,1335,1445,1290,1458,1245,1470,1208]);
        p.line(GOLD, 2.700, [48,1423,80,1438,120,1442,165,1432,210,1413,240,1395,265,1368,300,1325,335,1285,370,1262,410,1245,440,1240,480,1247,530,1275,600,1318,650,1355,700,1390,750,1413,800,1432,850,1452,890,1463,940,1464,1000,1452,1060,1440,1120,1434,1200,1440,1260,1455,1320,1464,1370,1463,1430,1450,1500,1439],
            [0,1437,50,1424,85,1411,130,1408,200,1415,310,1425,370,1437,410,1450,450,1450,550,1436,640,1422,700,1410,750,1388,790,1350,830,1305,870,1268,920,1238,960,1223,1010,1230,1090,1240,1150,1231,1210,1228,1260,1254,1330,1288,1400,1325,1425,1327,1445,1320,1470,1290]);
        p.text("0.34", 3, 36, 66);
        p.text("−0.14", 3, 117, 82);
        return p;
    },
    kdj() {
        const p = new Plot(121, 163, 481);
        p.grid([33, 61.500, 89.500], "14 7", "#d8d8d8");
        p.text("80", 963, 34, 31, 28, "#cbcbcb");
        p.text("50", 963, 62, 31, 28, "#cbcbcb");
        p.text("20", 963, 91, 31, 28, "#cbcbcb");
        p.line(BLACK, 2.500, [48,412,70,390,95,333,145,273,190,245,240,235,265,225,285,224,310,233,335,243,360,263,410,265,435,285,460,315,500,375,525,390,575,395,620,404,670,414,695,413,720,377,795,379,835,397,890,400,935,355,960,347,985,318,1010,310,1055,316,1105,296,1150,335,1185,368,1225,402,1260,406,1325,402,1370,360,1395,328,1420,303,1440,296,1465,307,1490,303,1513,287],
            [5,303,30,293,78,262,100,300,130,338,175,376,210,385,247,398,275,384,315,370,350,386,390,408,415,397,440,345,485,294,510,282,535,262,560,256,585,258,605,241,630,250,680,240,750,237,775,228,822,223,850,236,895,247,930,242,965,260,990,308,1015,313,1040,310,1065,297,1110,270,1135,258,1205,258,1230,305,1255,338,1325,348,1350,360,1375,384,1398,356,1425,308,1470,255]);
        p.line(GOLD, 2.600, [48,405,85,388,145,323,190,285,265,246,300,238,340,243,410,257,450,276,500,325,550,363,620,388,695,405,740,390,795,385,840,391,890,393,950,370,1010,337,1060,326,1105,311,1150,318,1180,335,1225,370,1270,388,1325,398,1370,383,1440,327,1515,307],
            [5,305,30,301,78,283,110,295,200,355,250,378,320,378,390,394,415,394,440,380,540,296,600,266,700,248,750,242,820,230,950,240,975,250,990,266,1030,290,1070,295,1110,284,1205,264,1260,301,1340,335,1380,360,1400,355,1430,335,1470,298]);
        p.line(PURPLE, 2.600, [48,435,70,370,95,245,120,205,145,175,192,170,218,190,265,176,300,205,335,247,360,296,385,285,410,285,432,315,480,440,503,481,525,478,575,432,600,436,650,433,672,438,697,420,720,342,745,354,770,370,793,367,815,403,840,415,865,406,888,409,935,312,960,305,985,256,1008,254,1030,283,1055,297,1080,272,1103,267,1130,325,1200,452,1225,474,1250,455,1300,420,1325,413,1345,360,1370,315,1395,262,1418,227,1440,228,1465,284,1488,282,1513,242],
            [5,303,30,285,78,218,102,332,128,398,150,431,175,446,222,434,247,442,270,400,320,354,342,400,390,445,413,390,438,283,462,234,487,210,512,203,535,186,558,199,583,219,606,195,630,231,678,220,703,231,725,225,750,233,775,207,822,210,845,242,893,262,925,242,942,247,965,284,990,390,1015,378,1040,345,1085,284,1110,241,1135,228,1158,238,1185,236,1207,255,1230,367,1255,416,1278,400,1302,395,1327,380,1350,400,1375,444,1398,355,1422,260,1445,206,1470,166]);
        p.text("115.10", 3, 36, 103);
        p.text("−13.81", 3, 117, 97);
        return p;
    },
    fund() {
        const p = new Plot(121, 637, 953), zero = p.y(785);
        FUND.forEach((v, i) => {
            const y = p.y(v);
            p.rect(p.x(i) - 3.400, Math.min(y, zero), 7, Math.abs(y - zero), y < zero ? "#c93130" : "#07a007");
        });
        p.line(GOLD, 1, [46,778,94,767,118,790,190,780,215,780,238,752,262,743,286,780,310,785,358,840,380,835,405,818,430,850,453,870,478,848,502,866,526,852,575,796,622,795,646,787,672,790,718,764,765,770,800,764,850,787,890,795,950,782,985,767,1010,764,1050,780,1080,779,1130,797,1170,793,1220,806,1290,795,1340,792,1400,788,1480,793],
            [5,790,30,780,75,768,100,783,125,780,150,788,195,812,245,818,295,816,350,795,400,790,440,770,490,772,580,793,650,793,700,788,740,783,772,757,800,765,825,770,865,793,892,825,940,805,985,800,1010,808,1085,795,1110,765,1132,746,1155,758,1205,760,1228,790,1252,812,1280,797,1325,793,1348,773,1375,783,1425,790,1445,760,1467,733]);
        p.line(PURPLE, 1, [46,780,190,778,238,772,262,765,286,781,310,783,340,795,380,790,410,797,450,832,502,851,526,835,575,833,600,826,622,832,660,818,690,800,720,783,760,780,840,776,880,781,960,778,1100,781,1220,795,1290,796,1400,790],
            [0,790,80,785,170,786,200,795,300,812,400,800,450,785,540,782,640,791,740,789,775,776,860,780,900,792,960,788,1010,817,1060,803,1090,800,1130,777,1160,781,1250,783,1330,779,1380,796,1425,791,1467,753]);
        p.text("1.70亿", 3, 36.500, 98);
        p.text("−1.94亿", 3, 118.500, 113);
        return p;
    },
    volume() {
        const p = new Plot(121, 1110, 1426), base = 120.500;
        VOLUME.split(/\s+/).forEach((item, i) => {
            const x = p.x(i), y = p.y(Number(item.replace("g", "")));
            if (item[0] === "g") p.rect(x - 3.400, y, 7, base - y, GREEN);
            else p.rect(x - 3.200, y + 1, 7, base - y - 1, "#fdeaea", `stroke="${RED}" stroke-width="2.200"`);
        });
        p.line(GOLD, 2.600, [46,1370,80,1362,120,1332,150,1321,220,1314,240,1318,262,1300,285,1265,310,1230,340,1217,362,1208,382,1182,405,1213,430,1246,460,1248,480,1262,502,1298,540,1318,575,1340,622,1350,650,1342,720,1348,780,1352,830,1368,880,1380,910,1382,945,1362,985,1343,1020,1335,1060,1350,1120,1352,1170,1363,1225,1380,1270,1386,1320,1386,1360,1370,1430,1350,1480,1360],
            [0,1360,50,1356,75,1345,100,1331,150,1340,220,1367,290,1355,340,1360,400,1378,450,1368,530,1365,580,1378,640,1374,700,1368,735,1363,775,1325,820,1270,845,1254,870,1256,910,1280,940,1293,1000,1298,1040,1313,1080,1328,1120,1310,1150,1304,1205,1308,1250,1340,1320,1348,1360,1356,1400,1350,1430,1328,1467,1288]);
        p.line(PURPLE, 2.600, [46,1352,90,1358,150,1346,240,1330,265,1318,310,1275,355,1262,385,1246,455,1232,500,1240,540,1278,600,1300,622,1320,650,1327,690,1343,780,1350,860,1362,900,1369,960,1363,1060,1358,1130,1350,1200,1362,1250,1372,1340,1378,1430,1370],
            [0,1362,100,1346,170,1354,280,1350,340,1363,440,1363,510,1370,600,1370,700,1368,760,1358,800,1330,840,1312,910,1295,960,1276,990,1277,1030,1294,1080,1300,1140,1303,1180,1314,1240,1322,1310,1326,1370,1345,1410,1347,1467,1320]);
        p.line("#1f8f1f", 2.600, [46,1308,90,1308,115,1303,150,1312,200,1330,265,1333,310,1314,350,1310,410,1294,480,1280,560,1277,640,1285,700,1287,740,1293,790,1317,850,1335,900,1351,960,1353,1100,1357,1230,1365,1310,1368,1420,1360],
            [0,1367,60,1368,130,1358,230,1355,370,1358,470,1360,620,1368,740,1368,810,1350,870,1336,960,1320,1080,1310,1150,1300,1210,1297,1260,1308,1380,1326,1467,1322]);
        p.text("314.2万", 1, 41, 118);
        return p;
    }
};

define("chart-panel", `
    <style>
        :host { display: block; margin: 0 12px; }
        svg { display: block; width: 100%; }
    </style>`, (host, root) => {
    const plot = charts[host.getAttribute("kind")]();
    const holder = document.createElement("div");
    holder.innerHTML = `<svg height="${plot.height}" viewBox="0 0 ${WIDTH} ${plot.height}">
        <rect x=".8" y=".8" width="${WIDTH - 1.600}" height="${plot.height - 1.600}" fill="none" stroke="#e2e2e2" stroke-width="1.600"/>
        ${plot.out.join("")}</svg>`;
    root.append(holder.firstChild);
});
</script>
</body>
</html>
